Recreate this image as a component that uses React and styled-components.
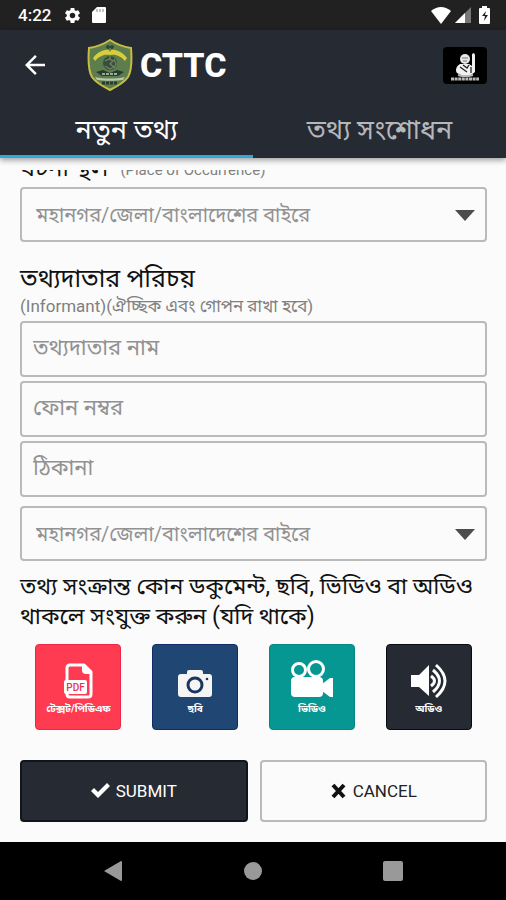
import React from "react";
import styled, { createGlobalStyle } from "styled-components";
import { MdArrowBack, MdSettings } from "react-icons/md";

const GlobalStyle = createGlobalStyle`
  :root {
    --dark: #262b33;
    --page: #fbfbfb;
    --accent: #2fa8dc;
    --border: #bababa;
    --hint: #929292;
  }
  * {
    box-sizing: border-box;
  }
  body {
    margin: 0;
    background-color: var(--page);
    font-family: Roboto, "Noto Sans Bengali", "Noto Sans", sans-serif;
  }
  button, input, select {
    font-family: inherit;
    margin: 0;
  }
`;

const StyledApp = styled.div`
  min-height: 100vh;
  display: flex;
  flex-direction: column;
`;

const StatusBar = styled.div`
  height: 30px;
  padding: 0 15px 0 18px;
  background-color: #212121;
  color: #fff;
  display: flex;
  align-items: center;
  justify-content: space-between;

  .status__group {
    display: flex;
    align-items: center;
    gap: 4px;
  }
  .status__time {
    font-size: 17px;
    font-weight: 500;
    margin-right: 8px;
  }
  .status__card {
    margin-left: 6px;
  }
  .status__battery {
    margin-left: 4px;
  }
`;

const Header = styled.header`
  background-color: var(--dark);
  box-shadow: 0 2px 6px rgba(0, 0, 0, 0.4);
  color: #fff;
  z-index: 1;
`;

const AppBar = styled.div`
  height: 70px;
  padding: 0 19px 0 20px;
  display: flex;
  align-items: center;

  .bar__back {
    display: flex;
    padding: 0;
    border: none;
    background: none;
    color: inherit;
    cursor: pointer;
  }
  .bar__crest {
    margin-left: 37px;
  }
  h1 {
    flex: 1;
    margin: 0 0 0 7px;
    font-size: 34px;
    line-height: 40px;
    font-weight: 800;
  }
`;

const Tabs = styled.nav`
  display: grid;
  grid-template-columns: 1fr 1fr;
`;

const Tab = styled.button`
  height: 58px;
  padding: 4px 0 0;
  border: none;
  border-bottom: 3px solid ${({ $active }) => ($active ? "var(--accent)" : "transparent")};
  background: none;
  color: ${({ $active }) => ($active ? "#fff" : "#b5b7ba")};
  font-size: 27px;
  line-height: 32px;
  cursor: pointer;
`;

const Form = styled.form`
  flex: 1;
  padding: 12px 19px 20px 20px;
  background-color: var(--page);
  display: flex;
  flex-direction: column;
`;

/* scrolled half way under the header */
const ScrolledLabel = styled.label`
  height: 17px;
  padding-bottom: 5px;
  overflow: hidden;
  display: flex;
  align-items: flex-end;
  gap: 12px;
  font-size: 24px;
  line-height: 28px;
  color: #111;

  small {
    font-size: 15px;
    line-height: 24px;
    color: #808080;
  }
`;

const SectionTitle = styled.h2`
  margin: 21px 0 0;
  font-size: 25px;
  line-height: 32px;
  font-weight: 400;
  color: #111;
`;

const SectionHint = styled.p`
  margin: 0 0 4px;
  font-size: 17px;
  line-height: 22px;
  color: #808080;
`;

const Fields = styled.div`
  display: flex;
  flex-direction: column;
  gap: 4px;
  margin-bottom: 9px;
`;

const TextField = styled.input`
  width: 100%;
  height: 56px;
  padding: 0 11px 4px;
  border: 2px solid var(--border);
  border-radius: 4px;
  background-color: transparent;
  color: #111;
  font-size: 22px;

  &::placeholder {
    color: var(--hint);
    opacity: 1;
  }
`;

const StyledSelect = styled.div`
  display: grid;
  align-items: center;

  select {
    grid-area: 1 / 1;
    width: 100%;
    height: 55px;
    padding: 0 40px 0 14px;
    border: 2px solid var(--border);
    border-radius: 4px;
    appearance: none;
    background-color: transparent;
    color: var(--hint);
    font-size: 20px;
  }
  svg {
    grid-area: 1 / 1;
    justify-self: end;
    margin-right: 12px;
    pointer-events: none;
  }
`;

const Note = styled.p`
  margin: 11px 0 12px;
  font-size: 23px;
  line-height: 30px;
  color: #111;
`;

const Tiles = styled.div`
  display: grid;
  grid-template-columns: repeat(4, 1fr);
  justify-items: center;
`;

const Tile = styled.button`
  width: 86px;
  height: 86px;
  padding: 12px 0 0;
  border: 1px solid ${({ $edge }) => $edge};
  border-radius: 4px;
  background-color: ${({ $color }) => $color};
  color: #fff;
  font-size: 10px;
  line-height: 16px;
  font-weight: 700;
  white-space: nowrap;
  display: flex;
  flex-direction: column;
  align-items: center;
  cursor: pointer;
`;

const Actions = styled.div`
  display: grid;
  grid-template-columns: 1fr 1fr;
  gap: 12px;
  margin-top: 30px;
`;

const ActionButton = styled.button`
  height: 62px;
  border: 2px solid ${({ $primary }) => ($primary ? "#11151b" : "var(--border)")};
  border-radius: 4px;
  background-color: ${({ $primary }) => ($primary ? "var(--dark)" : "transparent")};
  color: ${({ $primary }) => ($primary ? "#fff" : "#222")};
  font-size: 17px;
  display: flex;
  align-items: center;
  justify-content: center;
  gap: 5px;
  cursor: pointer;
`;

const SystemNav = styled.div`
  height: 58px;
  background-color: #000;
  display: flex;
  align-items: center;
  justify-content: center;
  gap: 120px;

  button {
    display: flex;
    padding: 0;
    border: none;
    background: none;
  }
`;

const Crest = () => (
  <svg className="bar__crest" width="46" height="52" viewBox="0 0 46 52" role="img" aria-label="CTTC crest">
    <path d="M23 1 C17 5 9 8 2 9 C1 21 1 31 5 38 C9 44 17 48 23 51 C29 48 37 44 41 38 C45 31 45 21 44 9 C37 8 29 5 23 1Z" fill="#5d7d4d" stroke="#c6bd43" strokeWidth="2" />
    <path d="M6 19 C11 12 19 10 22 11 L23 13 L24 11 C27 10 35 12 40 19 L38 22 C33 16 27 15 23 16 C19 15 13 16 8 22Z" fill="#d8cd3c" />
    <path d="M19 8h8M21 6v4M25 6v4" stroke="#334a38" strokeWidth="2" />
    <circle cx="23" cy="24" r="7" fill="#354e3e" />
    <path d="M23 16v4M18 22l4-2 4 2-3 3 4 3-4 2-5-3M27 20l2 5-2 4" fill="none" stroke="#73845d" strokeWidth="1.3" />
    <path d="M9 33l7-2 7 3 7-3 7 2-6 4H15Z" fill="#263c35" />
    <path d="M15 35h16" stroke="#c6cfbd" strokeWidth="1.3" strokeDasharray="3 1" />
    <path d="M8 38c9 2 21 2 30 0l-2 3c-8 1-18 1-26 0Z" fill="#bac8a9" />
    <path d="M15 44h16" stroke="#253d2f" strokeWidth="3" strokeDasharray="3 1" />
  </svg>
);

const Badge = () => (
  <svg width="44" height="37" viewBox="0 0 44 37" role="img" aria-label="Profile">
    <rect width="44" height="37" rx="4" fill="#000" />
    <circle cx="22" cy="12" r="5" fill="#e8e8e8" />
    <path d="M19 11h6M20 14h4" stroke="#777" />
    <path d="M17 17c-4 2-5 7-3 9l4 2h10l4-3V8l-1-2-2 1v12l-3-2Z" fill="#f2f2f2" />
    <path d="M17 20l7 5M20 18l4 3 2-3M28 20v6" stroke="#222" strokeWidth="1.3" fill="none" />
    <path d="M15 28l4 1h7l4-1" stroke="#bbb" strokeWidth="2" fill="none" />
    <path d="M8 32h28" stroke="#b9b9b9" strokeWidth="3" strokeDasharray="3 .6" />
  </svg>
);

const PdfIcon = () => (
  <svg width="36" height="44" viewBox="0 0 36 44" aria-hidden="true">
    <path d="M7 24V11q0-3 3-3h14l7 7v22q0 3-3 3H10q-3 0-3-3" fill="none" stroke="#fff" strokeWidth="3" />
    <path d="M22 7v6q0 4 4 4h6v-3l-8-7Z" fill="#fff" />
    <rect x="4" y="23" width="23" height="14" rx="2" fill="#fff" />
    <text x="15.500" y="34" textAnchor="middle" fontSize="10" fontWeight="500" fill="#e8364f">PDF</text>
  </svg>
);

const CameraIcon = () => (
  <svg width="36" height="44" viewBox="0 0 36 44" aria-hidden="true">
    <path d="M4 17h6v-2q0-2 2-2h12q2 0 2 2v2h6q3 0 3 3v17q0 3-3 3H4q-3 0-3-3V20q0-3 3-3Z" fill="#f5f5f5" />
    <circle cx="18" cy="28" r="7" fill="none" stroke="#1b355f" strokeWidth="3" />
    <circle cx="30" cy="22" r="1.300" fill="#1b355f" />
  </svg>
);

const VideoIcon = () => (
  <svg width="44" height="44" viewBox="0 0 44 44" aria-hidden="true">
    <g fill="none" stroke="#fff" strokeWidth="3">
      <circle cx="9" cy="13" r="6.500" />
      <circle cx="26" cy="12" r="7.500" />
    </g>
    <rect x="1" y="20" width="32" height="20" rx="4" fill="#fff" />
    <path d="M32 27l8-6h3v19h-3l-8-6Z" fill="#fff" />
  </svg>
);

const AudioIcon = () => (
  <svg width="38" height="44" viewBox="0 0 38 44" aria-hidden="true">
    <path d="M1 18h8L19 8v31L9 30H1Z" fill="#fff" />
    <g fill="none" stroke="#fff" strokeWidth="3">
      <path d="M21 19q7 5 0 10" />
      <path d="M23 13q13 11 0 22" />
      <path d="M26 8q18 16 0 32" />
    </g>
  </svg>
);

const tiles = [
  { label: "টেক্সট/পিডিএফ", color: "#ff3b52", edge: "#ed2844", icon: <PdfIcon /> },
  { label: "ছবি", color: "#204673", edge: "#102c6b", icon: <CameraIcon /> },
  { label: "ভিডিও", color: "#069793", edge: "#058883", icon: <VideoIcon /> },
  { label: "অডিও", color: "#262b33", edge: "#080c12", icon: <AudioIcon /> },
];

const AreaSelect = ({ id, label }) => (
  <StyledSelect>
    <select id={id} aria-label={label}>
      <option>মহানগর/জেলা/বাংলাদেশের বাইরে</option>
    </select>
    <svg width="20" height="12" viewBox="0 0 20 12" aria-hidden="true">
      <path d="M0 1h20L10 12Z" fill="#4c4c4c" />
    </svg>
  </StyledSelect>
);

const App = () => {
  return (
    <StyledApp>
      <GlobalStyle />
      <StatusBar>
        <div className="status__group">
          <span className="status__time">4:22</span>
          <MdSettings size={19} />
          <svg className="status__card" width="14" height="16" viewBox="0 0 14 16" aria-hidden="true">
            <path d="M5 0h8q1 0 1 1v14q0 1-1 1H1q-1 0-1-1V5Z" fill="#fff" />
            <path d="M5 2v3M8 2v3M11 2v3" stroke="#888" />
          </svg>
        </div>
        <div className="status__group">
          <svg width="20" height="17" viewBox="0 0 20 17" aria-hidden="true">
            <path d="M0 4Q10-4 20 4L10 17Z" fill="#fff" />
          </svg>
          <svg width="16" height="16" viewBox="0 0 16 16" aria-hidden="true">
            <path d="M16 0v16H0Z" fill="#777" />
            <path d="M10 6v10H0Z" fill="#fff" />
          </svg>
          <svg className="status__battery" width="12" height="18" viewBox="0 0 12 18" aria-hidden="true">
            <path d="M3 0h5v2h2q1 0 1 1v14q0 1-1 1H1q-1 0-1-1V3q0-1 1-1h2Z" fill="#fff" />
            <path d="M7 5L3 10h3l-1 5 4-6H6Z" fill="#212121" />
          </svg>
        </div>
      </StatusBar>
      <Header>
        <AppBar>
          <button className="bar__back" aria-label="Back">
            <MdArrowBack size={30} />
          </button>
          <Crest />
          <h1>CTTC</h1>
          <Badge />
        </AppBar>
        <Tabs>
          <Tab $active>নতুন তথ্য</Tab>
          <Tab>তথ্য সংশোধন</Tab>
        </Tabs>
      </Header>
      <Form onSubmit={(e) => e.preventDefault()}>
        <ScrolledLabel htmlFor="place">
          ঘটনা স্থল <small>(Place of Occurrence)</small>
        </ScrolledLabel>
        <AreaSelect id="place" />
        <SectionTitle>তথ্যদাতার পরিচয়</SectionTitle>
        <SectionHint>(Informant)(ঐচ্ছিক এবং গোপন রাখা হবে)</SectionHint>
        <Fields>
          <TextField placeholder="তথ্যদাতার নাম" aria-label="তথ্যদাতার নাম" />
          <TextField type="tel" placeholder="ফোন নম্বর" aria-label="ফোন নম্বর" />
          <TextField placeholder="ঠিকানা" aria-label="ঠিকানা" />
        </Fields>
        <AreaSelect id="area" label="তথ্যদাতার এলাকা" />
        <Note>তথ্য সংক্রান্ত কোন ডকুমেন্ট, ছবি, ভিডিও বা অডিও থাকলে সংযুক্ত করুন (যদি থাকে)</Note>
        <Tiles>
          {tiles.map(({ label, color, edge, icon }) => (
            <Tile key={label} type="button" $color={color} $edge={edge}>
              {icon}
              {label}
            </Tile>
          ))}
        </Tiles>
        <Actions>
          <ActionButton type="submit" $primary>
            <svg width="20" height="16" viewBox="0 0 20 16" aria-hidden="true">
              <path d="M0 8l3-3 4 4 9-9 3 3L7 15Z" fill="#fff" />
            </svg>
            SUBMIT
          </ActionButton>
          <ActionButton type="button">
            <svg width="18" height="16" viewBox="0 0 18 16" aria-hidden="true">
              <path d="M3 2l11 12M14 2L3 14" stroke="#111" strokeWidth="4" />
            </svg>
            CANCEL
          </ActionButton>
        </Actions>
      </Form>
      <SystemNav>
        <button aria-label="Back">
          <svg width="20" height="22" viewBox="0 0 20 22">
            <path d="M1 11L18 1q1 0 1 1v18q0 1-1 1Z" fill="#999" />
          </svg>
        </button>
        <button aria-label="Home">
          <svg width="20" height="20" viewBox="0 0 20 20">
            <circle cx="10" cy="10" r="9" fill="#999" />
          </svg>
        </button>
        <button aria-label="Recent apps">
          <svg width="20" height="20" viewBox="0 0 20 20">
            <rect width="20" height="20" rx="2" fill="#999" />
          </svg>
        </button>
      </SystemNav>
    </StyledApp>
  );
};

export default App;
